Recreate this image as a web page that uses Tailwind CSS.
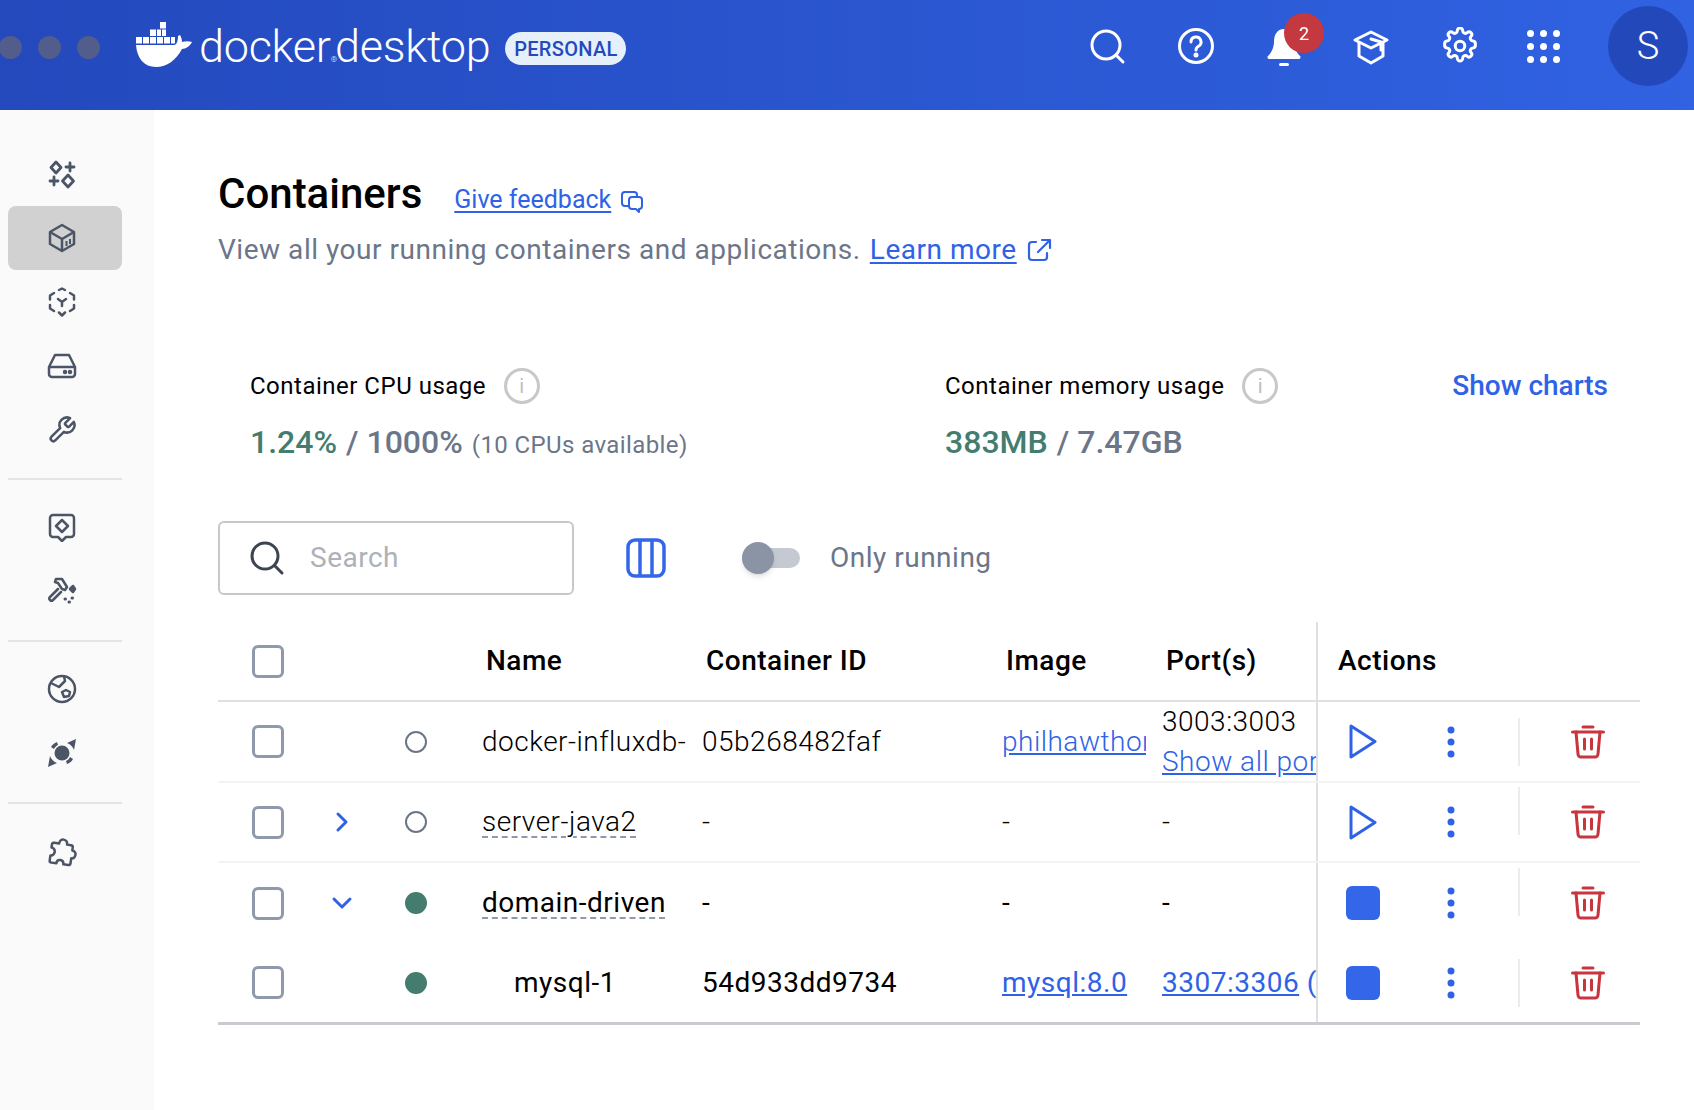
<!DOCTYPE html>
<html lang="en">
<head>
    <meta charset="UTF-8">
    <title>Docker Desktop - Containers</title>
    <script src="https://cdn.jsdelivr.net/npm/@tailwindcss/browser@4"></script>
</head>
<body class="bg-white font-['Roboto',sans-serif] w-[1694px] h-[1110px] overflow-hidden">
    <!-- Top bar -->
    <header class="h-[110px] bg-gradient-to-r from-[#2449bd] to-[#3062e2] flex items-start text-white">
        <div class="flex items-center h-[94px] w-[137px] -ml-[1px] shrink-0 pl-0 gap-[16px]">
            <span class="w-[23px] h-[23px] rounded-full bg-[#525d8c]"></span>
            <span class="w-[23px] h-[23px] rounded-full bg-[#525d8c]"></span>
            <span class="w-[23px] h-[23px] rounded-full bg-[#525d8c]"></span>
        </div>
        <svg class="w-[56px] h-[45px] mt-[22px] shrink-0" viewBox="0 0 56 45" fill="#fff">
            <rect x="24" y="0" width="6" height="6.5"/>
            <rect x="14" y="7.5" width="6" height="6.5"/><rect x="21" y="7.5" width="4" height="6.5"/><rect x="26" y="7.5" width="4" height="6.5"/>
            <rect x="0" y="15" width="6" height="6.5"/><rect x="7" y="15" width="6" height="6.5"/><rect x="14" y="15" width="6" height="6.5"/><rect x="21" y="15" width="6" height="6.5"/><rect x="28" y="15" width="6" height="6.5"/><rect x="35" y="15" width="4" height="6.5"/>
            <path d="M0 23H38C41 23 42 18 42 14L44 13C45 15 46 17 46 20C49 19 53 19 56 20C54 24 50 27 46 27C40 38 31 45 20 45C8 45 1 36 0 23Z"/>
        </svg>
        <div class="ml-[7px] mt-[17px] h-[60px] leading-[60px] text-[45px] font-light tracking-[-0.3px] whitespace-nowrap shrink-0">docker<span class="text-[8px] tracking-normal">®</span><span class="-ml-[2px]">desktop</span></div>
        <span class="ml-[15px] mt-[32px] w-[121px] h-[33px] rounded-full bg-[#e5f0fb] text-[#2549bd] text-[20px] font-medium flex items-center justify-center tracking-[0.3px] shrink-0">PERSONAL</span>
        <div class="ml-auto flex items-center h-[92px] text-white">
            <svg class="w-[38px] h-[38px]" viewBox="0 0 38 38" fill="none" stroke="currentColor" stroke-width="3" stroke-linecap="round"><circle cx="18" cy="18" r="14"/><path d="M28 28l7 7"/></svg>
            <svg class="w-[38px] h-[38px] ml-[51px]" viewBox="0 0 38 38" fill="none" stroke="currentColor" stroke-width="3" stroke-linecap="round"><circle cx="19" cy="19" r="16.5"/><path d="M14 15a5 5 0 1 1 7.5 4.300c-1.700 1-2.500 1.900-2.500 3.700"/><circle cx="19" cy="28" r="1" fill="currentColor"/></svg>
            <div class="relative w-[38px] h-[38px] ml-[50px]">
                <svg class="w-[38px] h-[42px]" viewBox="0 0 38 42" fill="currentColor"><path d="M19 2c-7 0-10 6-10 13 0 6-3 11-6 14-1 1-.5 3 1 3h30c1.500 0 2-2 1-3-3-3-6-8-6-14 0-7-3-13-10-13z"/><rect x="14" y="36" width="10" height="3" rx="1.500"/></svg>
                <span class="absolute -top-[14px] left-[19px] w-[40px] h-[40px] rounded-full bg-[#c4383f] flex items-center justify-center text-[18px]">2</span>
            </div>
            <svg class="w-[38px] h-[38px] ml-[49px]" viewBox="0 0 38 38" fill="none" stroke="currentColor" stroke-width="3" stroke-linejoin="round" stroke-linecap="round"><path d="M19 5L3 13l16 8 16-8z"/><path d="M7 16v13l12 7 12-7V16"/><path d="M19 12l10 3v8"/></svg>
            <svg class="w-[38px] h-[38px] ml-[51px]" viewBox="0 0 24 24" fill="none" stroke="currentColor" stroke-width="1.900" stroke-linejoin="round"><circle cx="12" cy="12" r="3"/><path d="M10.300 2.300a1.700 1.700 0 0 1 3.400 0 1.700 1.700 0 0 0 2.900 1.200 1.700 1.700 0 0 1 2.400 2.400 1.700 1.700 0 0 0 1.200 2.900 1.700 1.700 0 0 1 1.500 1.700v1a1.700 1.700 0 0 1-1.500 1.700 1.700 1.700 0 0 0-1.200 2.900 1.700 1.700 0 0 1-2.400 2.400 1.700 1.700 0 0 0-2.900 1.200 1.700 1.700 0 0 1-3.400 0 1.700 1.700 0 0 0-2.900-1.200 1.700 1.700 0 0 1-2.400-2.400 1.700 1.700 0 0 0-1.200-2.900 1.700 1.700 0 0 1-1.500-1.700v-1a1.700 1.700 0 0 1 1.500-1.700 1.700 1.700 0 0 0 1.200-2.900 1.700 1.700 0 0 1 2.400-2.400 1.700 1.700 0 0 0 2.900-1.200z"/></svg>
            <div class="grid grid-cols-3 gap-x-[6px] gap-y-[6px] ml-[48px]">
                <span class="w-[7px] h-[7px] rounded-full bg-white"></span><span class="w-[7px] h-[7px] rounded-full bg-white"></span><span class="w-[7px] h-[7px] rounded-full bg-white"></span>
                <span class="w-[7px] h-[7px] rounded-full bg-white"></span><span class="w-[7px] h-[7px] rounded-full bg-white"></span><span class="w-[7px] h-[7px] rounded-full bg-white"></span>
                <span class="w-[7px] h-[7px] rounded-full bg-white"></span><span class="w-[7px] h-[7px] rounded-full bg-white"></span><span class="w-[7px] h-[7px] rounded-full bg-white"></span>
            </div>
            <div class="w-[80px] h-[80px] rounded-full bg-[#2348ba] flex items-center justify-center text-[38px] font-light ml-[48px] mr-[6px]">S</div>
        </div>
    </header>

    <div class="flex h-[1000px]">
        <!-- Sidebar -->
        <aside class="w-[154px] bg-[#fafafa] shrink-0 pt-[32px] pl-[8px] pr-[32px] text-[#4c5566]">
            <div class="h-[64px] pr-[6px] flex items-center justify-center">
                <svg class="w-[30px] h-[30px]" viewBox="0 0 30 30" fill="none" stroke="currentColor" stroke-width="2.800" stroke-linejoin="round"><path d="M9 3l5 5.500-5 5.500-5-5.500z"/><path d="M21 16l5.500 6-5.500 6-5.500-6z"/><path d="M23 4v8M19 8h8M7 18v8M3 22h8" stroke-linecap="round"/></svg>
            </div>
            <div class="h-[64px] pr-[6px] flex items-center justify-center rounded-[8px] bg-[#d1d1d1]">
                <svg class="w-[30px] h-[30px]" viewBox="0 0 30 30" fill="none" stroke="currentColor" stroke-width="2.500" stroke-linejoin="round"><path d="M15 2l12 7v12l-12 7-12-7V9z"/><path d="M3 9l12 7 12-7M15 16v12"/><path d="M19.500 18v5M23 16v5" stroke-width="2"/></svg>
            </div>
            <div class="h-[64px] pr-[6px] flex items-center justify-center">
                <svg class="w-[30px] h-[30px]" viewBox="0 0 30 30" fill="none" stroke="currentColor" stroke-width="2.500" stroke-linecap="round" stroke-linejoin="round"><path d="M12 3l3-1.500 3 1.500M23 6l4 2.500v4M27 18v3.500l-4 2.500M7 24l-4-2.500V18M3 12.500V8.500L7 6"/><path d="M11 12l4 3 4-3M15 15v4M12 25.500l3 3 3-3"/></svg>
            </div>
            <div class="h-[64px] pr-[6px] flex items-center justify-center">
                <svg class="w-[30px] h-[30px]" viewBox="0 0 30 30" fill="none" stroke="currentColor" stroke-width="2.500" stroke-linejoin="round"><path d="M8 4h14l6 12v7a3 3 0 0 1-3 3H5a3 3 0 0 1-3-3v-7z"/><path d="M2 16h26"/><circle cx="18" cy="21" r="1" fill="currentColor"/><circle cx="23" cy="21" r="1" fill="currentColor"/></svg>
            </div>
            <div class="h-[64px] pr-[6px] flex items-center justify-center">
                <svg class="w-[30px] h-[30px]" viewBox="0 0 24 24" fill="none" stroke="currentColor" stroke-width="2" stroke-linecap="round" stroke-linejoin="round"><path d="M14.700 6.300a1 1 0 0 0 0 1.400l1.600 1.600a1 1 0 0 0 1.400 0l3.770-3.770a6 6 0 0 1-7.940 7.940l-6.910 6.910a2.120 2.120 0 0 1-3-3l6.910-6.910a6 6 0 0 1 7.940-7.940l-3.760 3.760z"/></svg>
            </div>
            <div class="h-[2px] bg-[#e4e4e4] mt-[16px] mb-[15px]"></div>
            <div class="h-[64px] pr-[6px] flex items-center justify-center">
                <svg class="w-[30px] h-[30px]" viewBox="0 0 30 30" fill="none" stroke="currentColor" stroke-width="2.500" stroke-linejoin="round"><path d="M6 3h18a3 3 0 0 1 3 3v16a3 3 0 0 1-3 3h-5l-4 4-4-4H6a3 3 0 0 1-3-3V6a3 3 0 0 1 3-3z"/><path d="M15 8l6 6-6 6-6-6z"/></svg>
            </div>
            <div class="h-[64px] pr-[6px] flex items-center justify-center">
                <svg class="w-[30px] h-[30px]" viewBox="0 0 30 30" fill="none" stroke="currentColor" stroke-width="2.500" stroke-linejoin="round" stroke-linecap="round"><path d="M9 3h6l5 8-2 3-3-1-4-6-3-1z"/><path d="M11 13l-8 8a2 2 0 0 0 3 3l8-8"/><path d="M26 10l2 3-2 3-3-3z" fill="currentColor"/><path d="M18 23h.500M25 22h.500M22 26h.500" stroke-width="3"/></svg>
            </div>
            <div class="h-[2px] bg-[#e4e4e4] mt-[17px] mb-[15px]"></div>
            <div class="h-[64px] pr-[6px] flex items-center justify-center">
                <svg class="w-[30px] h-[30px]" viewBox="0 0 30 30" fill="none" stroke="currentColor" stroke-width="2.500" stroke-linejoin="round"><circle cx="15" cy="15" r="13"/><path d="M4 9l8 4 6-6-1-5"/><path d="M15 18l4-2 4 2-1 4-5 1z"/></svg>
            </div>
            <div class="h-[64px] pr-[6px] flex items-center justify-center">
                <svg class="w-[30px] h-[30px]" viewBox="0 0 30 30" fill="currentColor"><circle cx="15" cy="15" r="7.500"/><path d="M29 1l-2 11c-1-3-4-6-7-7zM1 29l2-11c1 3 4 6 7 7z"/><path d="M4 9c1-2 3-4 6-5l1 3c-2 1-3 2-4 4zM26 21c-1 2-3 4-6 5l-1-3c2-1 3-2 4-4z"/></svg>
            </div>
            <div class="h-[2px] bg-[#e4e4e4] mt-[17px] mb-[16px]"></div>
            <div class="h-[64px] pr-[6px] flex items-center justify-center">
                <svg class="w-[30px] h-[30px]" viewBox="0 0 30 30" fill="none" stroke="currentColor" stroke-width="2.500" stroke-linejoin="round"><path d="M11 7c0-6 8-6 8 0h4a2 2 0 0 1 2 2v3c5 0 5 8 0 8v5a2 2 0 0 1-2 2h-5c0-5-7-5-7 0H6a2 2 0 0 1-2-2v-5c5 0 5-8 0-8V9a2 2 0 0 1 2-2z" transform="rotate(8 15 15)"/></svg>
            </div>
        </aside>

        <!-- Main -->
        <main class="flex-1 pl-[64px] pr-[54px] pt-[56px]">
            <div class="flex items-center h-[56px]">
                <h1 class="text-[42px] font-medium text-black leading-[56px]">Containers</h1>
                <a class="ml-[32px] mt-[12px] text-[25px] text-[#2f62e6] underline underline-offset-[3px] decoration-2">Give feedback</a>
                <svg class="w-[24px] h-[24px] ml-[9px] mt-[14px] text-[#2f62e6]" viewBox="0 0 24 24" fill="none" stroke="currentColor" stroke-width="2" stroke-linejoin="round"><path d="M9 17H5a3 3 0 0 1-3-3V6a3 3 0 0 1 3-3h9a3 3 0 0 1 3 3v1"/><path d="M12 8h7a3 3 0 0 1 3 3v6a3 3 0 0 1-3 3v3l-3-3h-4a3 3 0 0 1-3-3v-6a3 3 0 0 1 3-3z"/></svg>
            </div>
            <div class="flex items-center h-[40px] mt-[8px] text-[28px] text-[#6b7689] tracking-[0.53px]">
                <span>View all your running containers and applications.</span>
                <a class="ml-[9px] text-[#2f62e6] underline underline-offset-[3px] decoration-2">Learn more</a>
                <svg class="w-[26px] h-[26px] ml-[9px] text-[#2f62e6]" viewBox="0 0 26 26" fill="none" stroke="currentColor" stroke-width="2.200" stroke-linecap="round" stroke-linejoin="round"><path d="M10 5H6a3 3 0 0 0-3 3v12a3 3 0 0 0 3 3h12a3 3 0 0 0 3-3v-4"/><path d="M12 15L24 3M16 3h8v8"/></svg>
            </div>

            <!-- Stats -->
            <div class="flex items-start mt-[96px] pl-[32px] relative h-[100px]">
                <div class="w-[695px]">
                    <div class="flex items-center h-[40px] text-[24px] text-black tracking-[0.5px]">
                        <span>Container CPU usage</span>
                        <span class="ml-[18px] w-[36px] h-[36px] rounded-full border-[3px] border-[#c8c8c8] text-[#bdbdbd] flex items-center justify-center text-[20px]">i</span>
                    </div>
                    <div class="flex items-baseline h-[40px] mt-[12px] text-[32px] font-medium text-[#6b7689]">
                        <span class="text-[#447d70]">1.24%</span><span class="ml-[9px]">/ 1000%</span><span class="ml-[9px] text-[24px] font-normal tracking-[0.4px]">(10 CPUs available)</span>
                    </div>
                </div>
                <div>
                    <div class="flex items-center h-[40px] text-[24px] text-black tracking-[0.5px]">
                        <span>Container memory usage</span>
                        <span class="ml-[18px] w-[36px] h-[36px] rounded-full border-[3px] border-[#c8c8c8] text-[#bdbdbd] flex items-center justify-center text-[20px]">i</span>
                    </div>
                    <div class="flex items-baseline h-[40px] mt-[12px] text-[32px] font-medium text-[#6b7689]">
                        <span class="text-[#447d70]">383MB</span><span class="ml-[9px]">/ 7.47GB</span>
                    </div>
                </div>
                <a class="ml-auto mr-[32px] h-[40px] leading-[40px] text-[28px] font-medium text-[#2f62e6]">Show charts</a>
            </div>

            <!-- Toolbar -->
            <div class="flex items-center h-[74px] mt-[55px]">
                <div class="w-[356px] h-[74px] rounded-[6px] border-2 border-[#c8c8c8] flex items-center pl-[29px]">
                    <svg class="w-[36px] h-[36px] text-[#3d4452]" viewBox="0 0 36 36" fill="none" stroke="currentColor" stroke-width="3" stroke-linecap="round"><circle cx="16" cy="16" r="13"/><path d="M26 26l7 7"/></svg>
                    <span class="ml-[25px] text-[28px] text-[#adb1b8] tracking-[0.5px]">Search</span>
                </div>
                <svg class="w-[40px] h-[40px] ml-[52px] text-[#3366e8]" viewBox="0 0 40 40" fill="none" stroke="currentColor" stroke-width="3.500"><rect x="2" y="2" width="36" height="36" rx="7"/><path d="M14 2v36M26 2v36"/></svg>
                <div class="flex items-center ml-[76px] w-[58px] h-[32px] relative">
                    <span class="w-full h-[20px] rounded-full bg-[#c4c9d2]"></span>
                    <span class="absolute left-0 top-0 w-[32px] h-[32px] rounded-full bg-[#8b94a5] shadow-md"></span>
                </div>
                <span class="ml-[30px] text-[28px] text-[#6b7689] tracking-[0.5px]">Only running</span>
            </div>

            <!-- Table -->
            <div class="mt-[27px] w-[1422px] border-b-[3px] border-[#c8ccd2] text-[28px] tracking-[0.5px] text-black">
                <div class="grid grid-cols-[100px_48px_100px_220px_300px_160px_170px_324px] h-[80px] border-b-2 border-[#e0e0e0] items-center font-medium">
                    <div class="flex justify-center"><span class="w-[32px] h-[33px] rounded-[6px] border-[3px] border-[#8f99ab]"></span></div>
                    <div></div><div></div>
                    <div class="pl-[20px]">Name</div>
                    <div class="pl-[20px]">Container ID</div>
                    <div class="pl-[20px]">Image</div>
                    <div class="pl-[20px]">Port(s)</div>
                    <div class="h-full flex items-center pl-[20px] border-l-2 border-[#e0e0e0]">Actions</div>
                </div>

                <!-- docker-influxdb -->
                <div class="grid grid-cols-[100px_48px_100px_220px_300px_160px_170px_324px] h-[81px] border-b-2 border-[#f3f3f3] items-center font-light">
                    <div class="flex justify-center"><span class="w-[32px] h-[33px] rounded-[6px] border-[3px] border-[#8f99ab]"></span></div>
                    <div></div>
                    <div class="flex justify-center"><span class="w-[22px] h-[22px] rounded-full border-2 border-[#6b7689]"></span></div>
                    <div class="pl-[16px] whitespace-nowrap">docker-influxdb-</div>
                    <div class="pl-[16px]">05b268482faf</div>
                    <div class="pl-[16px] overflow-hidden whitespace-nowrap text-[#2f62e6] underline">philhawthorne/docker</div>
                    <div class="pl-[16px] overflow-hidden whitespace-nowrap leading-[40px]">
                        <div>3003:3003</div>
                        <div class="text-[#2f62e6] underline">Show all ports (4)</div>
                    </div>
                    <div class="h-full flex items-center border-l-2 border-[#e0e0e0]">
                        <div class="w-[90px] flex justify-center"><svg class="w-[28px] h-[35px] text-[#2f62e6]" viewBox="0 0 28 35" fill="none" stroke="currentColor" stroke-width="3" stroke-linejoin="round"><path d="M2 2l24 15.500L2 33z"/></svg></div>
                        <div class="w-[85px] flex justify-center"><svg class="w-[8px] h-[32px] text-[#2f62e6]" viewBox="0 0 8 32" fill="currentColor"><circle cx="4" cy="4" r="3.500"/><circle cx="4" cy="16" r="3.500"/><circle cx="4" cy="28" r="3.500"/></svg></div>
                        <span class="w-[2px] h-[48px] ml-[25px] bg-[#ececec]"></span>
                        <svg class="w-[34px] h-[34px] ml-[51px] text-[#c8353c]" viewBox="0 0 34 34" fill="none" stroke="currentColor" stroke-width="3" stroke-linecap="round" stroke-linejoin="round"><path d="M1.500 7h31M12 2h10"/><path d="M5 7l2 22a3 3 0 0 0 3 3h14a3 3 0 0 0 3-3l2-22"/><path d="M13.500 14v10M20.500 14v10"/></svg>
                    </div>
                </div>

                <!-- server-java2 -->
                <div class="grid grid-cols-[100px_48px_100px_220px_300px_160px_170px_324px] h-[80px] border-b-2 border-[#f3f3f3] items-center font-light">
                    <div class="flex justify-center"><span class="w-[32px] h-[33px] rounded-[6px] border-[3px] border-[#8f99ab]"></span></div>
                    <div class="flex justify-center"><svg class="w-[14px] h-[22px] text-[#2f62e6]" viewBox="0 0 14 22" fill="none" stroke="currentColor" stroke-width="3" stroke-linecap="round" stroke-linejoin="round"><path d="M3 3l8 8-8 8"/></svg></div>
                    <div class="flex justify-center"><span class="w-[22px] h-[22px] rounded-full border-2 border-[#6b7689]"></span></div>
                    <div class="pl-[16px] whitespace-nowrap"><span class="underline decoration-dashed decoration-2 decoration-[#8f99ab] underline-offset-[5px]">server-java2</span></div>
                    <div class="pl-[16px]">-</div>
                    <div class="pl-[16px]">-</div>
                    <div class="pl-[16px]">-</div>
                    <div class="h-full flex items-center border-l-2 border-[#e0e0e0]">
                        <div class="w-[90px] flex justify-center"><svg class="w-[28px] h-[35px] text-[#2f62e6]" viewBox="0 0 28 35" fill="none" stroke="currentColor" stroke-width="3" stroke-linejoin="round"><path d="M2 2l24 15.500L2 33z"/></svg></div>
                        <div class="w-[85px] flex justify-center"><svg class="w-[8px] h-[32px] text-[#2f62e6]" viewBox="0 0 8 32" fill="currentColor"><circle cx="4" cy="4" r="3.500"/><circle cx="4" cy="16" r="3.500"/><circle cx="4" cy="28" r="3.500"/></svg></div>
                        <span class="w-[2px] h-[48px] ml-[25px] mb-[22px] bg-[#ececec]"></span>
                        <svg class="w-[34px] h-[34px] ml-[51px] text-[#c8353c]" viewBox="0 0 34 34" fill="none" stroke="currentColor" stroke-width="3" stroke-linecap="round" stroke-linejoin="round"><path d="M1.500 7h31M12 2h10"/><path d="M5 7l2 22a3 3 0 0 0 3 3h14a3 3 0 0 0 3-3l2-22"/><path d="M13.500 14v10M20.500 14v10"/></svg>
                    </div>
                </div>

                <!-- domain-driven -->
                <div class="grid grid-cols-[100px_48px_100px_220px_300px_160px_170px_324px] h-[80px] items-center">
                    <div class="flex justify-center"><span class="w-[32px] h-[33px] rounded-[6px] border-[3px] border-[#8f99ab]"></span></div>
                    <div class="flex justify-center"><svg class="w-[22px] h-[14px] text-[#2f62e6]" viewBox="0 0 22 14" fill="none" stroke="currentColor" stroke-width="3" stroke-linecap="round" stroke-linejoin="round"><path d="M3 3l8 8 8-8"/></svg></div>
                    <div class="flex justify-center"><span class="w-[22px] h-[22px] rounded-full bg-[#447d70]"></span></div>
                    <div class="pl-[16px] whitespace-nowrap"><span class="underline decoration-dashed decoration-2 decoration-[#8f99ab] underline-offset-[5px]">domain-driven</span></div>
                    <div class="pl-[16px]">-</div>
                    <div class="pl-[16px]">-</div>
                    <div class="pl-[16px]">-</div>
                    <div class="h-full flex items-center border-l-2 border-[#e0e0e0]">
                        <div class="w-[90px] flex justify-center"><span class="w-[34px] h-[34px] rounded-[6px] bg-[#3366e8]"></span></div>
                        <div class="w-[85px] flex justify-center"><svg class="w-[8px] h-[32px] text-[#2f62e6]" viewBox="0 0 8 32" fill="currentColor"><circle cx="4" cy="4" r="3.500"/><circle cx="4" cy="16" r="3.500"/><circle cx="4" cy="28" r="3.500"/></svg></div>
                        <span class="w-[2px] h-[48px] ml-[25px] mb-[22px] bg-[#ececec]"></span>
                        <svg class="w-[34px] h-[34px] ml-[51px] text-[#c8353c]" viewBox="0 0 34 34" fill="none" stroke="currentColor" stroke-width="3" stroke-linecap="round" stroke-linejoin="round"><path d="M1.500 7h31M12 2h10"/><path d="M5 7l2 22a3 3 0 0 0 3 3h14a3 3 0 0 0 3-3l2-22"/><path d="M13.500 14v10M20.500 14v10"/></svg>
                    </div>
                </div>

                <!-- mysql-1 -->
                <div class="grid grid-cols-[100px_48px_100px_220px_300px_160px_170px_324px] h-[79px] items-center">
                    <div class="flex justify-center"><span class="w-[32px] h-[33px] rounded-[6px] border-[3px] border-[#8f99ab]"></span></div>
                    <div></div>
                    <div class="flex justify-center"><span class="w-[22px] h-[22px] rounded-full bg-[#447d70]"></span></div>
                    <div class="pl-[48px] whitespace-nowrap">mysql-1</div>
                    <div class="pl-[16px]">54d933dd9734</div>
                    <div class="pl-[16px] overflow-hidden whitespace-nowrap text-[#2f62e6] underline">mysql:8.0</div>
                    <div class="pl-[16px] overflow-hidden whitespace-nowrap text-[#2f62e6]"><span class="underline">3307:3306</span> <span>(</span></div>
                    <div class="h-full flex items-center border-l-2 border-[#e0e0e0]">
                        <div class="w-[90px] flex justify-center"><span class="w-[34px] h-[34px] rounded-[6px] bg-[#3366e8]"></span></div>
                        <div class="w-[85px] flex justify-center"><svg class="w-[8px] h-[32px] text-[#2f62e6]" viewBox="0 0 8 32" fill="currentColor"><circle cx="4" cy="4" r="3.500"/><circle cx="4" cy="16" r="3.500"/><circle cx="4" cy="28" r="3.500"/></svg></div>
                        <span class="w-[2px] h-[48px] ml-[25px] bg-[#ececec]"></span>
                        <svg class="w-[34px] h-[34px] ml-[51px] text-[#c8353c]" viewBox="0 0 34 34" fill="none" stroke="currentColor" stroke-width="3" stroke-linecap="round" stroke-linejoin="round"><path d="M1.500 7h31M12 2h10"/><path d="M5 7l2 22a3 3 0 0 0 3 3h14a3 3 0 0 0 3-3l2-22"/><path d="M13.500 14v10M20.500 14v10"/></svg>
                    </div>
                </div>
            </div>
        </main>
    </div>
</body>
</html>
